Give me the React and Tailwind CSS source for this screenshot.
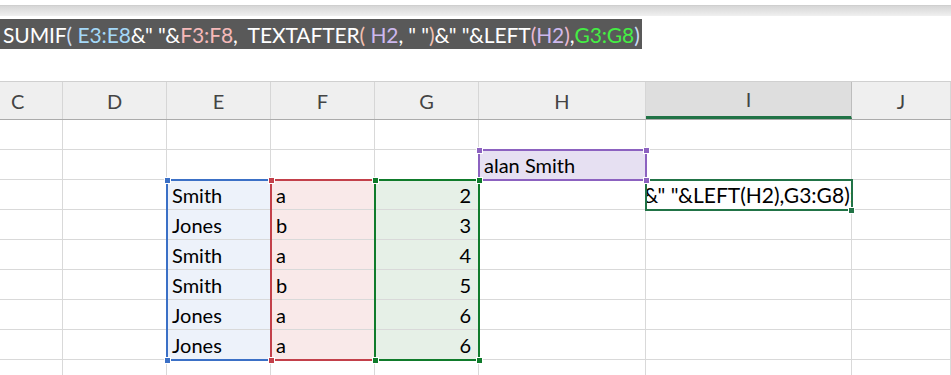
import React from "react";

const COLS = [
  { k: "C", w: "w-[63px]" },
  { k: "D", w: "w-[104px]" },
  { k: "E", w: "w-[104px]" },
  { k: "F", w: "w-[104px]" },
  { k: "G", w: "w-[104px]" },
  { k: "H", w: "w-[167px]" },
  { k: "I", w: "w-[206px]" },
  { k: "J", w: "flex-1" },
];

const data = [
  ["Smith", "a", 2],
  ["Jones", "b", 3],
  ["Smith", "a", 4],
  ["Smith", "b", 5],
  ["Jones", "a", 6],
  ["Jones", "a", 6],
];

function Cell({ w, bg = "", children, className = "" }) {
  return (
    <div
      className={`${w} ${bg} shrink-0 border-r border-b border-[#d9d9d9] flex items-center overflow-hidden ${className}`}
    >
      {children}
    </div>
  );
}

function Handle({ className }) {
  return <div className={`absolute w-[7px] h-[7px] ${className}`} />;
}

export default function App() {
  const font = { fontFamily: "Lato, 'Open Sans', sans-serif" };
  return (
    <div className="w-[951px] h-[375px] bg-white overflow-hidden relative" style={font}>
      {/* top toolbar strip */}
      <div className="h-[5px] bg-white" />
      <div className="h-[11px] bg-gradient-to-b from-[#d6d6d6] to-[#f0f0f0] border-t border-[#cfcfcf]" />
      <div className="h-[3px] bg-white" />
      {/* formula band */}
      <div className="h-[30px] flex">
        <div className="bg-[#595959] h-[30px] flex items-center pl-[3px] pr-[2px] text-[21px] leading-none text-white whitespace-nowrap tracking-[-0.1px]">
          <span>SUMIF</span>
          <span className="text-[#c8dcf4]">(</span>
          <span>&nbsp;</span>
          <span className="text-[#a4d8f8]">E3:E8</span>
          <span>&amp;" "&amp;</span>
          <span className="text-[#f6b9b9]">F3:F8</span>
          <span>,&nbsp;&nbsp;TEXTAFTER</span>
          <span className="text-[#f2c0b0]">(</span>
          <span>&nbsp;</span>
          <span className="text-[#cdb8ee]">H2</span>
          <span>, " "</span>
          <span className="text-[#f2c0b0]">)</span>
          <span>&amp;" "&amp;LEFT</span>
          <span className="text-[#ecb8d0]">(</span>
          <span className="text-[#cdb8ee]">H2</span>
          <span className="text-[#ecb8d0]">)</span>
          <span>,</span>
          <span className="text-[#44ee44]">G3:G8</span>
          <span className="text-[#c8dcf4]">)</span>
        </div>
      </div>
      <div className="h-[32px] bg-white" />
      {/* grid */}
      <div className="relative border-t border-[#d0d0d0]">
        {/* header row */}
        <div className="flex h-[38px] bg-[#efefef] border-b border-[#ababab]">
          {COLS.map((c) => (
            <div
              key={c.k}
              className={`${c.w} shrink-0 flex items-center justify-center text-[20px] text-[#444] border-r ${
                c.k === "I"
                  ? "bg-[#dedede] border-b-[3px] border-b-[#217346] border-r-[#bdbdbd] text-[#2a2a2a]"
                  : "border-[#d6d6d6]"
              } ${c.k === "C" ? "justify-start pl-[11px]" : ""}`}
            >
              {c.k}
            </div>
          ))}
        </div>
        {/* row 1 */}
        <div className="flex h-[30px]">
          {COLS.map((c) => (
            <Cell key={c.k} w={c.w} />
          ))}
        </div>
        {/* row 2 */}
        <div className="flex h-[30px]">
          {COLS.map((c) =>
            c.k === "H" ? (
              <Cell key={c.k} w={c.w} bg="bg-[#e6e0f2]" className="pl-[5px] text-[20px] text-black">
                alan Smith
              </Cell>
            ) : (
              <Cell key={c.k} w={c.w} />
            )
          )}
        </div>
        {data.map((r, i) => (
          <div key={i} className="flex h-[30px]">
            {COLS.map((c) => {
              if (c.k === "E")
                return (
                  <Cell key={c.k} w={c.w} bg="bg-[#edf2fa]" className="pl-[5px] text-[20px] text-black">
                    {r[0]}
                  </Cell>
                );
              if (c.k === "F")
                return (
                  <Cell key={c.k} w={c.w} bg="bg-[#f9e9e9]" className="pl-[5px] text-[20px] text-black">
                    {r[1]}
                  </Cell>
                );
              if (c.k === "G")
                return (
                  <Cell key={c.k} w={c.w} bg="bg-[#e6f0e7]" className="justify-end pr-[7px] text-[20px] text-black">
                    {r[2]}
                  </Cell>
                );
              if (c.k === "I" && i === 0)
                return (
                  <Cell key={c.k} w={c.w} className="justify-end text-[21px] text-black">
                    <span className="whitespace-nowrap mr-[-4px]">&amp;" "&amp;LEFT(H2),G3:G8):</span>
                  </Cell>
                );
              return <Cell key={c.k} w={c.w} />;
            })}
          </div>
        ))}
        <div className="flex h-[30px]">
          {COLS.map((c) => (
            <Cell key={c.k} w={c.w} />
          ))}
        </div>

        {/* range highlight overlays */}
        <div className="absolute left-[166px] top-[97px] w-[106px] h-[182px] border-2 border-[#3b70c6] pointer-events-none" />
        <div className="absolute left-[270px] top-[97px] w-[106px] h-[182px] border-2 border-[#c3404a] pointer-events-none" />
        <div className="absolute left-[374px] top-[97px] w-[106px] h-[182px] border-2 border-[#0f7b2b] pointer-events-none" />
        <div className="absolute left-[478px] top-[67px] w-[169px] h-[32px] border-2 border-[#8c62c0] pointer-events-none" />
        <div className="absolute left-[645px] top-[97px] w-[208px] h-[32px] border-2 border-[#217346] pointer-events-none" />

        {/* handles */}
        <Handle className="left-[164px] top-[95px] bg-[#3b70c6] border border-white" />
        <Handle className="left-[164px] top-[275px] bg-[#3b70c6] border border-white" />
        <Handle className="left-[268px] top-[95px] bg-[#c3404a] border border-white" />
        <Handle className="left-[268px] top-[275px] bg-[#c3404a] border border-white" />
        <Handle className="left-[372px] top-[95px] bg-[#0f7b2b] border border-white" />
        <Handle className="left-[372px] top-[275px] bg-[#0f7b2b] border border-white" />
        <Handle className="left-[476px] top-[275px] bg-[#0f7b2b] border border-white" />
        <Handle className="left-[476px] top-[65px] bg-[#8c62c0] border border-white" />
        <Handle className="left-[643px] top-[65px] bg-[#8c62c0] border border-white" />
        <Handle className="left-[643px] top-[95px] bg-[#8c62c0] border border-white" />
        <Handle className="left-[476px] top-[95px] bg-[#0f7b2b] border border-white" />
        <Handle className="left-[848px] top-[125px] bg-[#217346] border border-white" />
      </div>
    </div>
  );
}
